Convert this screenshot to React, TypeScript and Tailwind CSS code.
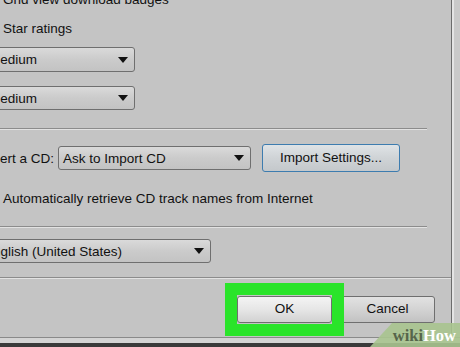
import React from "react";

function Arrow() {
  return (
    <svg width="10" height="6" viewBox="0 0 10 6" className="shrink-0">
      <polygon points="0,0 10,0 5,6" fill="#111" />
    </svg>
  );
}

function Dropdown({
  text,
  className,
}: {
  text: string;
  className: string;
}) {
  return (
    <div
      className={
        "flex items-center justify-between shrink-0 border border-[#6f6f6f] rounded-[3px] bg-gradient-to-b from-[#dadada] via-[#cbcbcb] to-[#c3c3c3] pl-[4px] pr-[6px] whitespace-nowrap " +
        className
      }
    >
      <span className="leading-[15px]">{text}</span>
      <Arrow />
    </div>
  );
}

function Sep({ className }: { className: string }) {
  return (
    <div className={"flex flex-col shrink-0 " + className}>
      <div className="h-[1px] bg-[#8c8c8c]" />
      <div className="h-[1px] bg-[#e2e2e2]" />
    </div>
  );
}

export default function App() {
  return (
    <div className="w-[460px] h-[347px] bg-[#c4c4c4] relative overflow-hidden font-['Liberation_Sans',Arial,sans-serif] text-[13.5px] text-[#111]">
      <div className="flex h-[337px]">
        <div className="flex flex-col w-[451px] shrink-0">
          <div className="mt-[-8px] h-[15px] leading-[15px] pl-[3px] whitespace-nowrap">
            Grid view download badges
          </div>
          <div className="mt-[14px] h-[15px] leading-[15px] pl-[3px] whitespace-nowrap">
            Star ratings
          </div>
          <Dropdown text="Medium" className="mt-[11px] h-[25px] ml-[-16px] w-[151px]" />
          <Dropdown text="Medium" className="mt-[14px] h-[24px] ml-[-16px] w-[151px]" />
          <Sep className="mt-[18px] w-[427px]" />
          <div className="mt-[14px] h-[28px] flex items-center">
            <span className="leading-[15px] whitespace-nowrap w-[58px] shrink-0">ert a CD:</span>
            <Dropdown text="Ask to Import CD" className="h-[24px] w-[193px]" />
            <div className="ml-[11px] h-[28px] w-[138px] shrink-0 flex items-center justify-center border border-[#3d7caf] rounded-[3px] bg-gradient-to-b from-[#dfe3e6] via-[#cfd3d6] to-[#c4c8cb]">
              Import Settings...
            </div>
          </div>
          <div className="mt-[19px] h-[15px] leading-[15px] pl-[3px] whitespace-nowrap">
            Automatically retrieve CD track names from Internet
          </div>
          <Sep className="mt-[20px] w-[427px]" />
          <Dropdown text="English (United States)" className="mt-[11px] h-[24px] ml-[-21px] w-[232px]" />
          <Sep className="mt-[14px] w-[451px]" />
          <div className="mt-[17px] h-[27px] flex justify-end gap-[8px] pr-[16px]">
            <div className="w-[95px] h-[27px] flex items-center justify-center border border-[#6f6f6f] rounded-[3px] bg-gradient-to-b from-[#f4f4f4] via-[#e6e6e6] to-[#d2d2d2]">
              OK
            </div>
            <div className="w-[95px] h-[27px] flex items-center justify-center border border-[#6f6f6f] rounded-[3px] bg-gradient-to-b from-[#e2e2e2] via-[#d3d3d3] to-[#c2c2c2]">
              Cancel
            </div>
          </div>
        </div>
        <div className="w-[1px] bg-[#6c6c6c] shrink-0" />
        <div className="w-[2px] bg-[#e4e4e4] shrink-0" />
        <div className="flex-1 bg-[#c9c9c9]" />
      </div>
      <div className="h-[1px] bg-[#8a8a8a]" />
      <div className="h-[5px] bg-[#d4d4d4]" />
      <div className="h-[4px] bg-[#3a3a3a]" />

      <div className="absolute left-[225px] top-[283px] w-[119px] h-[53px] border-[12px] border-[#2ae42a]" />

      <div
        className="absolute right-0 bottom-0 w-[90px] h-[24px] bg-[#a9c48f]/90 flex items-end justify-end pr-[4px] pb-[2px]"
        style={{ clipPath: "polygon(22px 0, 100% 0, 100% 100%, 0 100%)" }}
      >
        <span className="font-['Liberation_Serif',serif] font-bold text-[16.5px] leading-[18px]">
          <span className="text-[#56654a]">wiki</span>
          <span className="text-white">How</span>
        </span>
      </div>
    </div>
  );
}
